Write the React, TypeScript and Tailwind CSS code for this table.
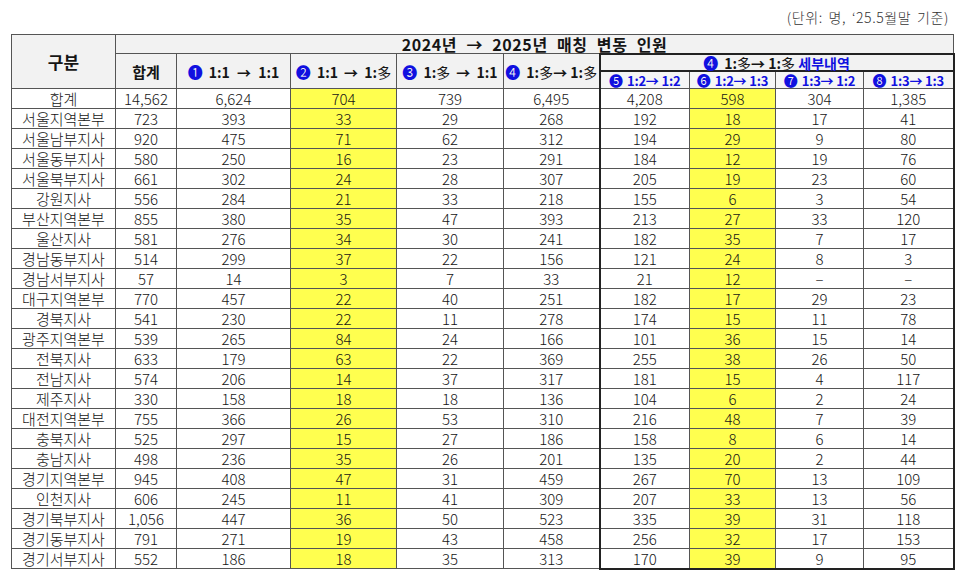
import React from "react";

const rows: string[][] = [
  ["합계", "14,562", "6,624", "704", "739", "6,495", "4,208", "598", "304", "1,385"],
  ["서울지역본부", "723", "393", "33", "29", "268", "192", "18", "17", "41"],
  ["서울남부지사", "920", "475", "71", "62", "312", "194", "29", "9", "80"],
  ["서울동부지사", "580", "250", "16", "23", "291", "184", "12", "19", "76"],
  ["서울북부지사", "661", "302", "24", "28", "307", "205", "19", "23", "60"],
  ["강원지사", "556", "284", "21", "33", "218", "155", "6", "3", "54"],
  ["부산지역본부", "855", "380", "35", "47", "393", "213", "27", "33", "120"],
  ["울산지사", "581", "276", "34", "30", "241", "182", "35", "7", "17"],
  ["경남동부지사", "514", "299", "37", "22", "156", "121", "24", "8", "3"],
  ["경남서부지사", "57", "14", "3", "7", "33", "21", "12", "–", "–"],
  ["대구지역본부", "770", "457", "22", "40", "251", "182", "17", "29", "23"],
  ["경북지사", "541", "230", "22", "11", "278", "174", "15", "11", "78"],
  ["광주지역본부", "539", "265", "84", "24", "166", "101", "36", "15", "14"],
  ["전북지사", "633", "179", "63", "22", "369", "255", "38", "26", "50"],
  ["전남지사", "574", "206", "14", "37", "317", "181", "15", "4", "117"],
  ["제주지사", "330", "158", "18", "18", "136", "104", "6", "2", "24"],
  ["대전지역본부", "755", "366", "26", "53", "310", "216", "48", "7", "39"],
  ["충북지사", "525", "297", "15", "27", "186", "158", "8", "6", "14"],
  ["충남지사", "498", "236", "35", "26", "201", "135", "20", "2", "44"],
  ["경기지역본부", "945", "408", "47", "31", "459", "267", "70", "13", "109"],
  ["인천지사", "606", "245", "11", "41", "309", "207", "33", "13", "56"],
  ["경기북부지사", "1,056", "447", "36", "50", "523", "335", "39", "31", "118"],
  ["경기동부지사", "791", "271", "19", "43", "458", "256", "32", "17", "153"],
  ["경기서부지사", "552", "186", "18", "35", "313", "170", "39", "9", "95"],
];

const widths = [104, 61, 114, 106, 107, 96, 90, 86, 88, 90];

const Num = ({ c }: { c: string }) => (
  <span className="text-[#1010e0] font-normal text-[15px] mr-[6px]">{c}</span>
);
const Ta = () => <span className="font-normal">多</span>;
const Sub = ({ c, t }: { c: string; t: string }) => (
  <>
    <span className="font-normal text-[14px] mr-[4px]">{c}</span>
    {t}
  </>
);

export default function App() {
  return (
    <div
      className="w-[960px] h-[575px] bg-white px-[11px] pt-[7px] text-[#151515]"
      style={{ fontFamily: '"Noto Sans CJK KR", "Noto Sans", sans-serif' }}
    >
      <div className="h-[27px] text-right text-[14px] font-light leading-[20px] tracking-[0.6px] [word-spacing:2px] text-[#333]">
        (단위: 명, ‘25.5월말 기준)
      </div>
      <table className="table-fixed border-collapse w-[942px] text-[15px] leading-none">
        <colgroup>
          {widths.map((w, i) => (
            <col key={i} style={{ width: w }} />
          ))}
        </colgroup>
        <thead>
          <tr className="h-[19px] bg-[#f2f2f2]">
            <th rowSpan={3} className="border border-[#555] text-[17px] font-bold">구분</th>
            <th colSpan={9} className="border border-[#555] text-[16px] font-bold tracking-[0.6px] [word-spacing:5px]">
              2024년 → 2025년 매칭 변동 인원
            </th>
          </tr>
          <tr className="h-[17px] bg-[#f2f2f2] text-[14px]">
            <th rowSpan={2} className="border border-[#555] font-bold text-[15px]">합계</th>
            <th rowSpan={2} className="border border-[#555] font-bold [word-spacing:4px]"><Num c="❶" />1:1 → 1:1</th>
            <th rowSpan={2} className="border border-[#555] font-bold [word-spacing:3px]"><Num c="❷" />1:1 → 1:<Ta /></th>
            <th rowSpan={2} className="border border-[#555] font-bold [word-spacing:3px]"><Num c="❸" />1:<Ta /> → 1:1</th>
            <th rowSpan={2} className="border border-[#555] font-bold"><Num c="❹" />1:<Ta />→ 1:<Ta /></th>
            <th colSpan={4} className="border-2 border-[#222] font-bold">
              <Num c="❹" />1:<Ta />→ 1:<Ta /> <span className="text-[#1010e0]">세부내역</span>
            </th>
          </tr>
          <tr className="h-[18px] bg-[#f5f5f5] text-[#1010e0] text-[13px] tracking-[-0.2px]">
            <th className="border border-[#555] border-l-2 border-l-[#222] font-bold"><Sub c="❺" t="1:2→ 1:2" /></th>
            <th className="border border-[#555] font-bold"><Sub c="❻" t="1:2→ 1:3" /></th>
            <th className="border border-[#555] font-bold"><Sub c="❼" t="1:3→ 1:2" /></th>
            <th className="border border-[#555] border-r-2 border-r-[#222] font-bold"><Sub c="❽" t="1:3→ 1:3" /></th>
          </tr>
        </thead>
        <tbody className="font-light">
          {rows.map((r, ri) => {
            const last = ri === rows.length - 1;
            return (
              <tr key={ri} className="h-[20px]">
                {r.map((v, ci) => {
                  let cls = "border border-[#555] text-center p-0";
                  if (ci === 3 || ci === 7) cls += " bg-[#ffff4f]";
                  if (ci === 6) cls += " border-l-2 border-l-[#222]";
                  if (ci === 9) cls += " border-r-2 border-r-[#222]";
                  if (last && ci >= 6) cls += " border-b-2 border-b-[#222]";
                  return (
                    <td key={ci} className={cls}>
                      {v}
                    </td>
                  );
                })}
              </tr>
            );
          })}
        </tbody>
      </table>
    </div>
  );
}
